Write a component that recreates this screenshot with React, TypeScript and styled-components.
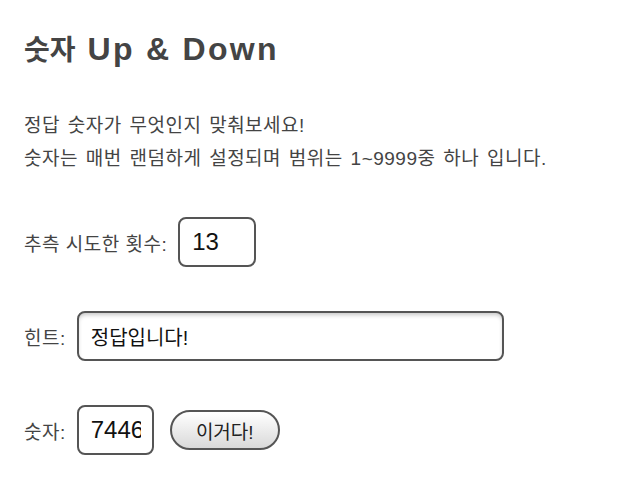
import React from "react";
import styled, { createGlobalStyle } from "styled-components";

const Global = createGlobalStyle`
  html, body { margin: 0; padding: 0; background: #fff; }
  body { font-family: "Liberation Sans", "Noto Sans CJK KR", sans-serif; color: #444; }
  * { box-sizing: border-box; }
`;

const Page = styled.div`
  padding: 29px 24px 24px;
  display: flex;
  flex-direction: column;
`;

const Title = styled.h1`
  margin: 0;
  height: 40px;
  font-size: 32px;
  line-height: 40px;
  font-weight: 700;
  color: #444;
  white-space: nowrap;
  display: flex;
  align-items: baseline;
`;

const TitleKo = styled.span`
  font-size: 28px;
  margin-right: 12px;
`;

const TitleEn = styled.span`
  letter-spacing: 2.3px;
`;

const Intro = styled.div`
  margin-top: 40px;
  display: flex;
  flex-direction: column;
  font-size: 19px;
  letter-spacing: 0.5px;
  word-spacing: 2px;
  color: #444;
  white-space: nowrap;
`;

const IntroLine = styled.div`
  height: 33px;
  line-height: 33px;
`;

const Form = styled.div`
  margin-top: 42px;
  display: flex;
  flex-direction: column;
  gap: 44px;
`;

const Row = styled.div`
  display: flex;
  align-items: center;
  height: 50px;
`;

const Label = styled.label`
  font-size: 19px;
  letter-spacing: 0.5px;
  color: #444;
  margin-right: 11px;
  white-space: nowrap;
`;

const Field = styled.input<{ $w: number; $inset?: boolean; $size: number }>`
  width: ${(p) => p.$w}px;
  height: 50px;
  border: 2px solid #555;
  border-radius: 8px;
  padding: 0 11px 0 12px;
  font-family: "Liberation Sans", "Noto Sans CJK KR", sans-serif;
  font-size: ${(p) => p.$size}px;
  color: #111;
  background: #fff;
  outline: none;
  box-shadow: ${(p) => (p.$inset ? "inset 0 3px 4px -1px rgba(0,0,0,0.22)" : "none")};
`;

const Button = styled.button`
  margin-left: 16px;
  width: 110px;
  height: 40px;
  border: 2px solid #555;
  border-radius: 20px;
  background: linear-gradient(#ffffff, #d9d9d9);
  font-family: "Liberation Sans", "Noto Sans CJK KR", sans-serif;
  font-size: 19px;
  color: #222;
  padding: 0;
`;

export default function App() {
  return (
    <>
      <Global />
      <Page>
        <Title>
          <TitleKo>숫자</TitleKo>
          <TitleEn>Up &amp; Down</TitleEn>
        </Title>
        <Intro>
          <IntroLine>정답 숫자가 무엇인지 맞춰보세요!</IntroLine>
          <IntroLine>숫자는 매번 랜덤하게 설정되며 범위는 1~9999중 하나 입니다.</IntroLine>
        </Intro>
        <Form>
          <Row>
            <Label>추측 시도한 횟수:</Label>
            <Field $w={78} $size={24} value="13" readOnly />
          </Row>
          <Row>
            <Label>힌트:</Label>
            <Field $w={427} $size={20} $inset value="정답입니다!" readOnly />
          </Row>
          <Row>
            <Label>숫자:</Label>
            <Field $w={77} $size={24} value="7446" readOnly />
            <Button>이거다!</Button>
          </Row>
        </Form>
      </Page>
    </>
  );
}
